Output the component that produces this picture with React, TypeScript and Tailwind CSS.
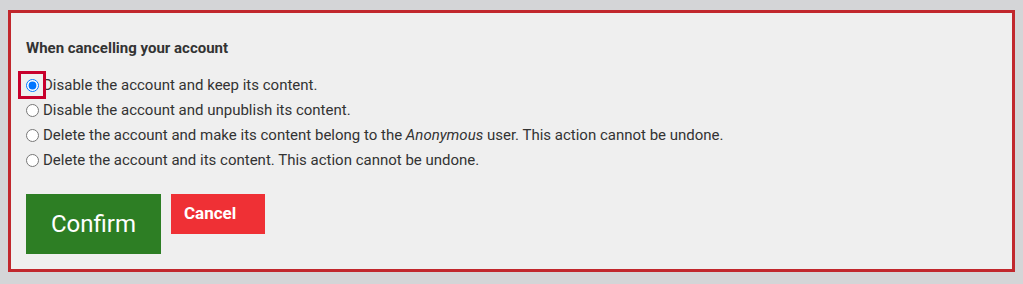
import React from "react";

const options = [
  { id: "a", label: <>Disable the account and keep its content.</> },
  { id: "b", label: <>Disable the account and unpublish its content.</> },
  {
    id: "c",
    label: (
      <>
        Delete the account and make its content belong to the <em>Anonymous</em> user. This action cannot be undone.
      </>
    ),
  },
  { id: "d", label: <>Delete the account and its content. This action cannot be undone.</> },
];

export default function App() {
  return (
    <div
      className="w-[1023px] h-[284px] bg-[#d4d5d7] pt-[10px] px-[8px] pb-[12px]"
      style={{ fontFamily: "Roboto, 'Liberation Sans', sans-serif" }}
    >
      <div className="h-full border-[3px] border-[#c1272d] bg-[#efefef] pl-[15px] pt-[25px] pb-[15px]">
        <div className="text-[15px] leading-[20px] font-bold text-[#333333]">When cancelling your account</div>
        <div className="mt-[15px] flex flex-col">
          {options.map((o, i) => (
            <label key={o.id} className="flex items-center h-[25px] text-[15px] text-[#333333]">
              <span className="relative flex shrink-0">
                <input
                  type="radio"
                  name="cancel"
                  defaultChecked={i === 0}
                  className="m-0 w-[13px] h-[13px]"
                />
                {i === 0 && (
                  <span className="absolute left-[-8px] right-[-7px] top-[-8px] bottom-[-7px] border-[3px] border-[#c8002c] pointer-events-none" />
                )}
              </span>
              <span className="ml-[4px]">{o.label}</span>
            </label>
          ))}
        </div>
        <div className="mt-[21px] flex items-start gap-[10px]">
          <button className="w-[135px] h-[60px] bg-[#2d7e24] text-white text-[24px] font-normal">Confirm</button>
          <button className="w-[94px] h-[40px] bg-[#ef3035] text-white text-[17px] font-bold text-left pl-[13px]">
            Cancel
          </button>
        </div>
      </div>
    </div>
  );
}
